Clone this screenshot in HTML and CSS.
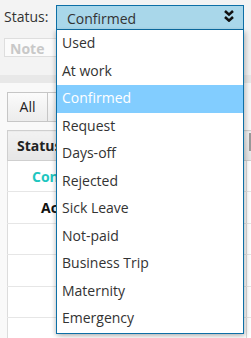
FILE: index.html
```html
<!DOCTYPE html>
<html>
<head>
<meta charset="utf-8">
<link rel="stylesheet" href="styles.css">
</head>
<body>
<div class="page">
  <div class="toolbar">
    <span class="lbl">Status:</span>
    <div class="select-wrap">
      <div class="select">
        <span class="sel-text">Confirmed</span>
        <svg class="chev" width="10" height="12" viewBox="0 0 10 12"><polyline points="1,1 5,4.6 9,1" fill="none" stroke="#111" stroke-width="2.6"/><polyline points="1,7 5,10.6 9,7" fill="none" stroke="#111" stroke-width="2.6"/></svg>
      </div>
      <ul class="list">
        <li>Used</li>
        <li>At work</li>
        <li class="active">Confirmed</li>
        <li>Request</li>
        <li>Days-off</li>
        <li>Rejected</li>
        <li>Sick Leave</li>
        <li>Not-paid</li>
        <li>Business Trip</li>
        <li>Maternity</li>
        <li>Emergency</li>
      </ul>
    </div>
  </div>
  <div class="filter">
    <div class="note">Note</div>
  </div>
  <div class="band"></div>
  <div class="content">
    <div class="btns">
      <div class="btn">All</div>
      <div class="btn wide">Used</div>
    </div>
    <table class="grid">
      <thead>
        <tr><th class="c1">Status</th><th class="c2"><span class="bar"></span></th></tr>
      </thead>
      <tbody>
        <tr><td class="c1 teal">Confirmed</td><td></td></tr>
        <tr><td class="c1 bold">Actions</td><td></td></tr>
        <tr><td class="c1"></td><td></td></tr>
        <tr><td class="c1"></td><td></td></tr>
        <tr><td class="c1"></td><td></td></tr>
        <tr><td class="c1"></td><td></td></tr>
      </tbody>
    </table>
  </div>
</div>
</body>
</html>
```
FILE: styles.css
```css
* { box-sizing: border-box; }
html, body { margin: 0; padding: 0; }
body {
  font-family: "Open Sans", "Noto Sans", sans-serif;
  font-size: 14px;
  color: #333;
  background: #f7f7f7;
  width: 251px;
  height: 338px;
  overflow: hidden;
}
.page { width: 251px; height: 338px; overflow: hidden; }
.toolbar {
  display: flex;
  align-items: center;
  padding: 5px 0 0 4px;
  height: 30px;
  background: #f3f3f3;
}
.lbl {
  width: 52px;
  margin-top: -2px;
  line-height: 19px;
}
.select-wrap { position: relative; width: 188px; }
.select {
  height: 25px;
  display: flex;
  align-items: center;
  justify-content: space-between;
  padding: 0 9px 0 10px;
  background: #a9d7ea;
  border: 1px solid #0d6fa6;
}
.sel-text { line-height: 19px; margin-top: 1px; }
.chev { display: block; margin-top: -3px; }
.list {
  position: absolute;
  top: 25px;
  left: 0;
  width: 188px;
  margin: 0;
  padding: 0;
  list-style: none;
  background: #fff;
  border: 1px solid #0d6fa6;
  border-top: none;
  box-shadow: 2px 2px 5px rgba(0,0,0,0.22), -2px 1px 4px rgba(0,0,0,0.12);
  z-index: 5;
}
.list li {
  height: 27.5px;
  line-height: 26.5px;
  padding-left: 5px;
  white-space: nowrap;
}
.list li.active {
  background: #82cdff;
  color: #fff;
}
.filter {
  height: 45px;
  padding: 8px 0 0 4px;
  background: #f3f3f3;
}
.note {
  width: 150px;
  height: 19px;
  border: 1px solid #dedede;
  background: #fbfbfb;
  padding: 2px 0 0 5px;
  line-height: 16px;
  font-weight: bold;
  color: #c8c8c8;
  overflow: hidden;
}
.band { height: 8px; background: #e8e8e8; }
.content {
  background: #f9f9f9;
  padding: 9px 0 0 7px;
  height: 255px;
  overflow: hidden;
}
.btns { display: flex; }
.btn {
  width: 41px;
  height: 30px;
  border: 1px solid #c6c6c6;
  background: linear-gradient(#fbfbfb, #ececec);
  text-align: center;
  line-height: 28px;
  color: #222;
}
.btn.wide { width: 70px; border-left: none; }
.grid {
  margin-top: 8px;
  border-collapse: collapse;
  width: 244px;
  background: #fff;
}
.grid th {
  height: 30px;
  background: linear-gradient(#f2f2f2, #e6e6e6);
  border: 1px solid #cfcfcf;
  border-right: none;
  text-align: left;
  font-weight: bold;
  color: #222;
  padding: 0 0 0 9px;
}
.grid th.c2 { padding: 0 0 0 3px; border-left: none; }
.bar {
  display: inline-block;
  width: 2px;
  height: 18px;
  background: #9a9a9a;
  vertical-align: middle;
  margin-top: -10px;
}
.grid .c1 { width: 239px; }
.grid td {
  height: 31.4px;
  padding: 0;
  border-bottom: 1px solid #e6e6e6;
  border-left: 1px solid #dcdcdc;
}
.grid td.c1 { padding-left: 24px; }
.grid td.teal { color: #1ec6c0; font-weight: bold; }
.grid td.bold { font-weight: bold; color: #111; padding-left: 33px; }
```
